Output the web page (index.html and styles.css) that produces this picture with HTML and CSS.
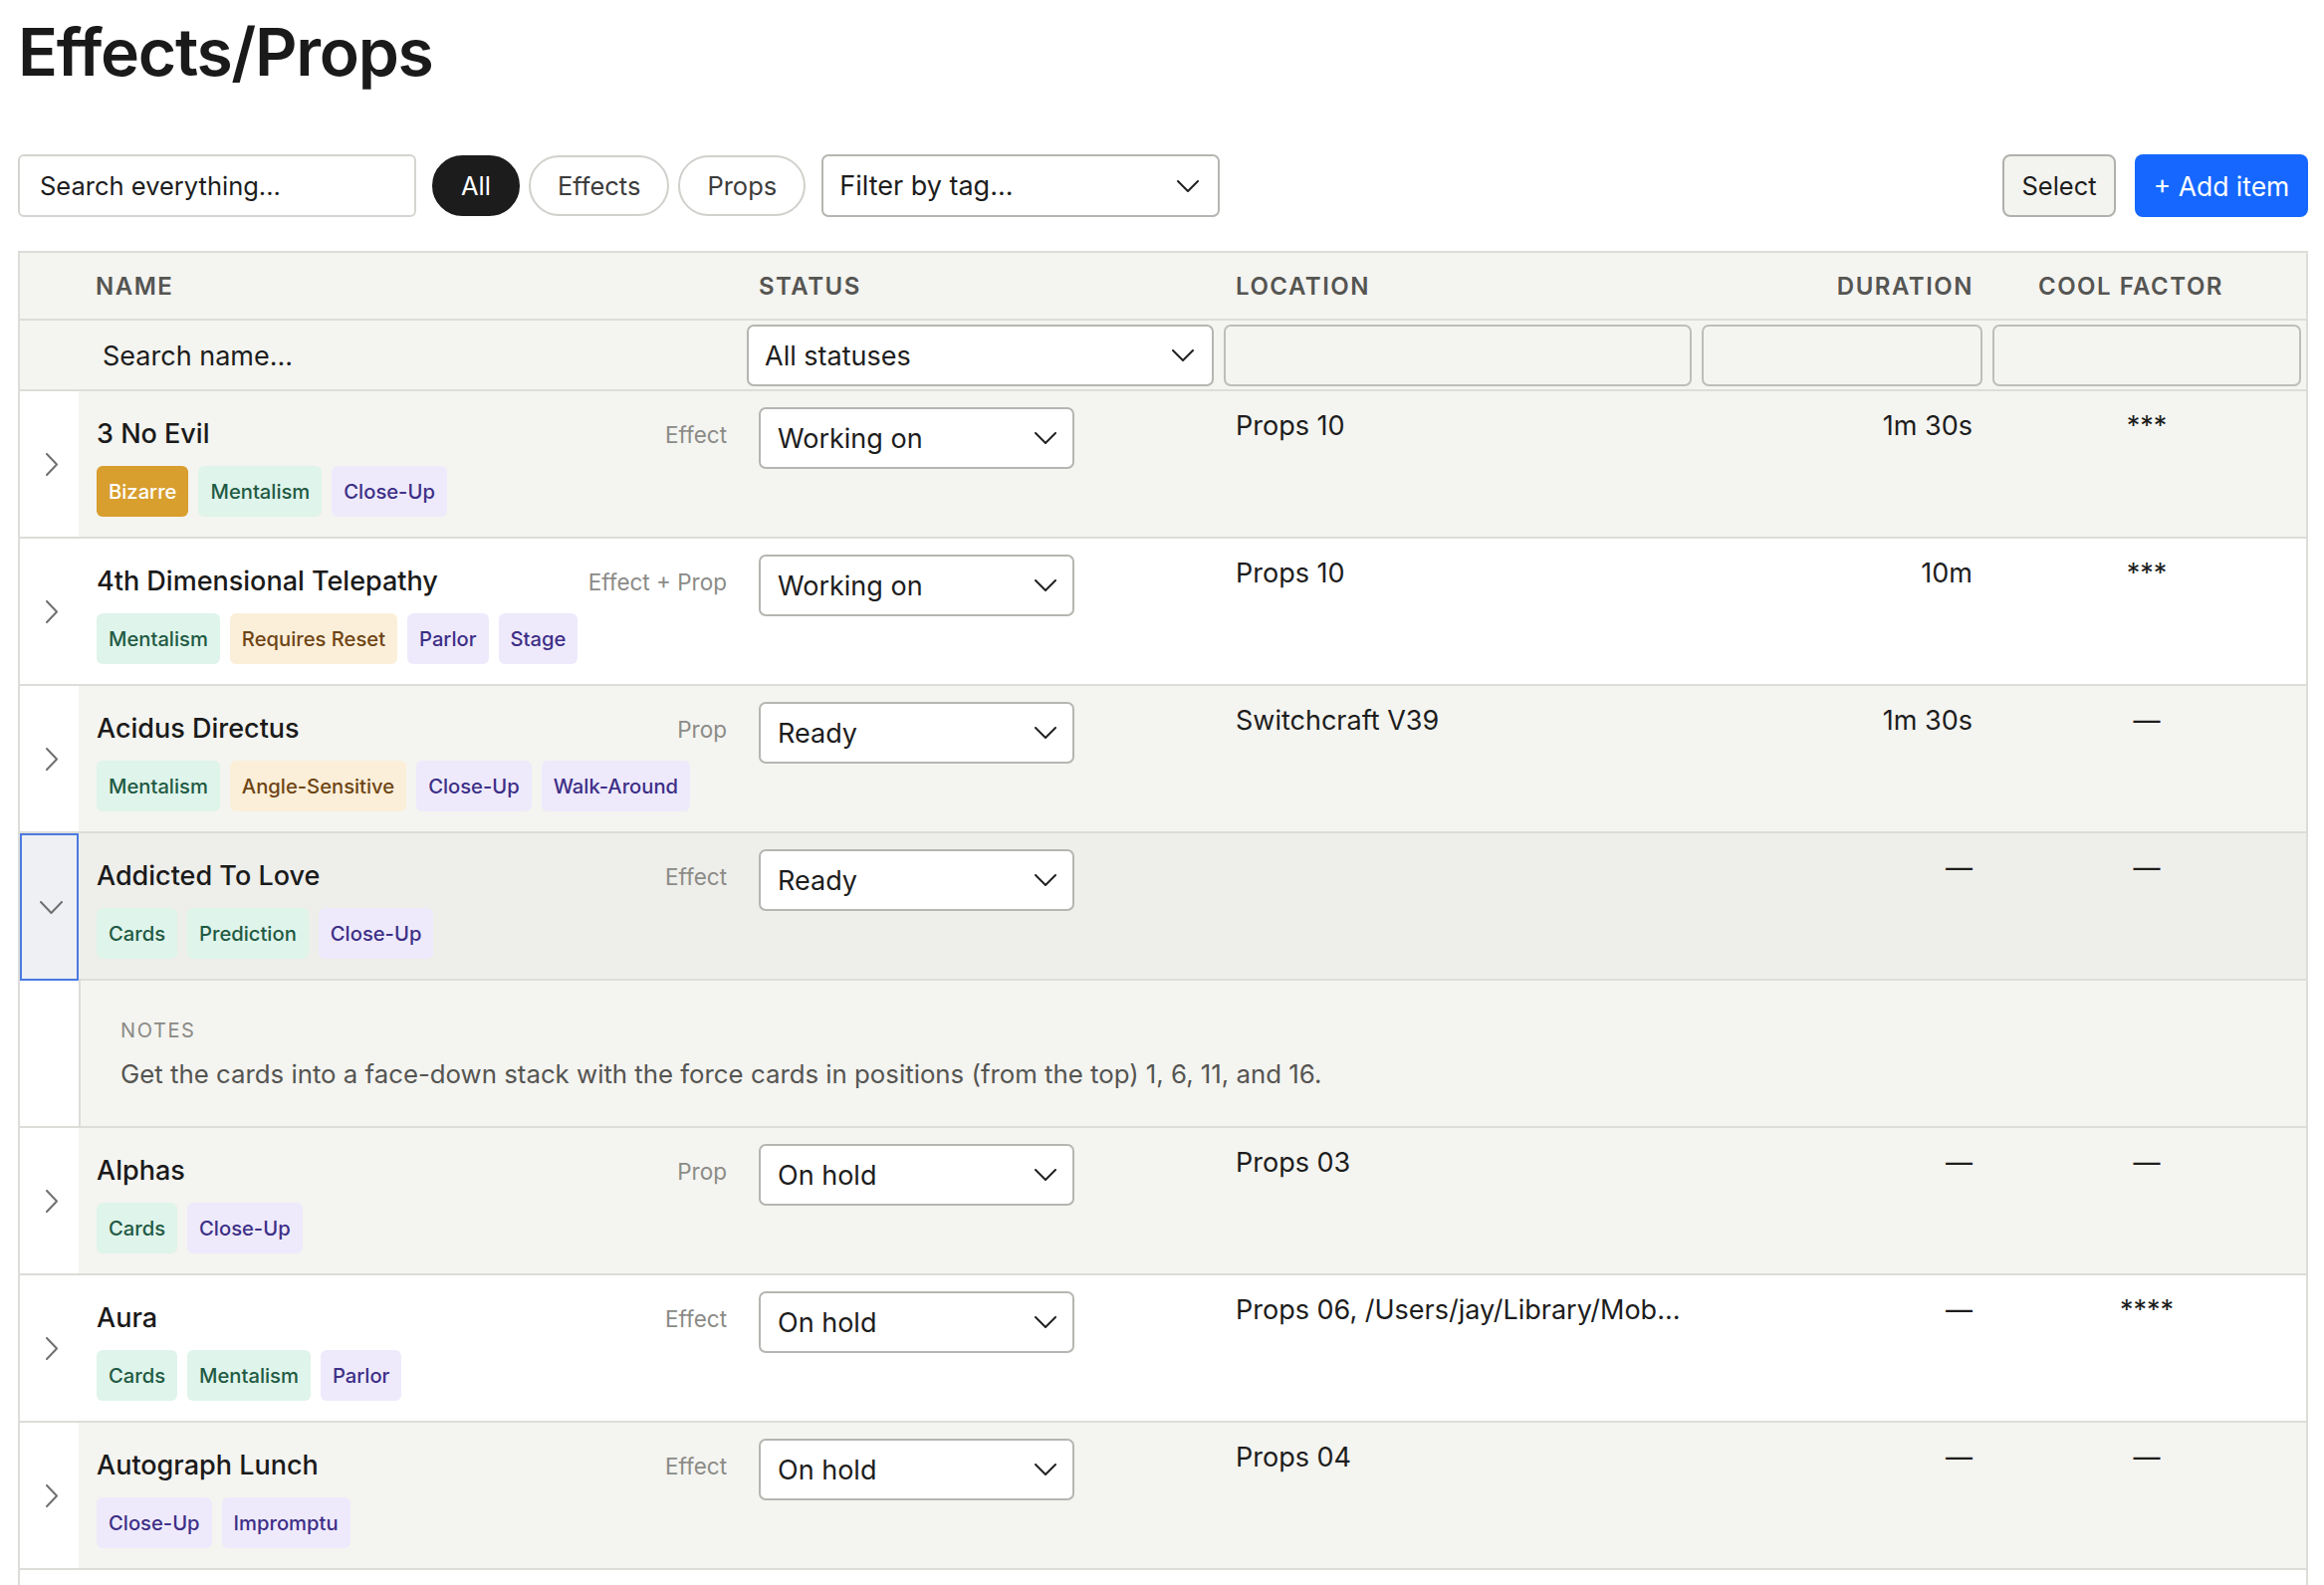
FILE: index.html
```html
<!DOCTYPE html>
<html lang="en">
<head>
<meta charset="utf-8">
<title>Effects/Props</title>
<link rel="stylesheet" href="styles.css">
</head>
<body>
<div class="page">
  <h1 class="title">Effects/Props</h1>

  <div class="toolbar">
    <input class="search" type="text" placeholder="Search everything...">
    <div class="pills">
      <button class="pill active">All</button>
      <button class="pill">Effects</button>
      <button class="pill">Props</button>
    </div>
    <div class="dropdown tag-filter">
      <span>Filter by tag...</span>
      <svg class="chev" viewBox="0 0 22 12" width="22" height="12"><path d="M1 1 L11 11 L21 1"/></svg>
    </div>
    <div class="spacer"></div>
    <button class="btn btn-select">Select</button>
    <button class="btn btn-add">+ Add item</button>
  </div>

  <div class="table-wrap">
    <table class="grid">
      <colgroup>
        <col class="c-exp">
        <col class="c-name">
        <col class="c-status">
        <col class="c-loc">
        <col class="c-dur">
        <col class="c-cool">
      </colgroup>
      <thead>
        <tr class="head">
          <th></th>
          <th>Name</th>
          <th>Status</th>
          <th>Location</th>
          <th class="dur">Duration</th>
          <th class="cool">Cool factor</th>
        </tr>
        <tr class="filters">
          <td></td>
          <td><input class="name-search" type="text" placeholder="Search name..."></td>
          <td>
            <div class="dropdown status-filter">
              <span>All statuses</span>
              <svg class="chev" viewBox="0 0 22 12" width="22" height="12"><path d="M1 1 L11 11 L21 1"/></svg>
            </div>
          </td>
          <td><div class="finput"></div></td>
          <td><div class="finput"></div></td>
          <td><div class="finput"></div></td>
        </tr>
      </thead>
      <tbody>
        <tr class="row gray">
          <td class="exp"><svg class="arrow" viewBox="0 0 12 23" width="12" height="23"><path d="M1 1 L11 11.5 L1 22"/></svg></td>
          <td class="name-cell">
            <div class="name-line"><span class="name">3 No Evil</span><span class="kind">Effect</span></div>
            <div class="tags"><span class="tag gold">Bizarre</span><span class="tag mint">Mentalism</span><span class="tag lav">Close-Up</span></div>
          </td>
          <td class="status-cell"><div class="dropdown status"><span>Working on</span><svg class="chev" viewBox="0 0 22 12" width="22" height="12"><path d="M1 1 L11 11 L21 1"/></svg></div></td>
          <td class="loc">Props 10</td>
          <td class="dur">1m 30s</td>
          <td class="cool">***</td>
        </tr>
        <tr class="row">
          <td class="exp"><svg class="arrow" viewBox="0 0 12 23" width="12" height="23"><path d="M1 1 L11 11.5 L1 22"/></svg></td>
          <td class="name-cell">
            <div class="name-line"><span class="name">4th Dimensional Telepathy</span><span class="kind">Effect + Prop</span></div>
            <div class="tags"><span class="tag mint">Mentalism</span><span class="tag peach">Requires Reset</span><span class="tag lav">Parlor</span><span class="tag lav">Stage</span></div>
          </td>
          <td class="status-cell"><div class="dropdown status"><span>Working on</span><svg class="chev" viewBox="0 0 22 12" width="22" height="12"><path d="M1 1 L11 11 L21 1"/></svg></div></td>
          <td class="loc">Props 10</td>
          <td class="dur">10m</td>
          <td class="cool">***</td>
        </tr>
        <tr class="row gray">
          <td class="exp"><svg class="arrow" viewBox="0 0 12 23" width="12" height="23"><path d="M1 1 L11 11.5 L1 22"/></svg></td>
          <td class="name-cell">
            <div class="name-line"><span class="name">Acidus Directus</span><span class="kind">Prop</span></div>
            <div class="tags"><span class="tag mint">Mentalism</span><span class="tag peach">Angle-Sensitive</span><span class="tag lav">Close-Up</span><span class="tag lav">Walk-Around</span></div>
          </td>
          <td class="status-cell"><div class="dropdown status"><span>Ready</span><svg class="chev" viewBox="0 0 22 12" width="22" height="12"><path d="M1 1 L11 11 L21 1"/></svg></div></td>
          <td class="loc">Switchcraft V39</td>
          <td class="dur">1m 30s</td>
          <td class="cool">—</td>
        </tr>
        <tr class="row open">
          <td class="exp focused"><svg class="arrow-down" viewBox="0 0 23 13" width="23" height="13"><path d="M1 1 L11.5 12 L22 1"/></svg></td>
          <td class="name-cell">
            <div class="name-line"><span class="name">Addicted To Love</span><span class="kind">Effect</span></div>
            <div class="tags"><span class="tag mint">Cards</span><span class="tag mint">Prediction</span><span class="tag lav">Close-Up</span></div>
          </td>
          <td class="status-cell"><div class="dropdown status"><span>Ready</span><svg class="chev" viewBox="0 0 22 12" width="22" height="12"><path d="M1 1 L11 11 L21 1"/></svg></div></td>
          <td class="loc"></td>
          <td class="dur">—</td>
          <td class="cool">—</td>
        </tr>
        <tr class="notes-row">
          <td class="exp"></td>
          <td class="notes" colspan="5">
            <div class="notes-label">Notes</div>
            <div class="notes-text">Get the cards into a face-down stack with the force cards in positions (from the top) 1, 6, 11, and 16.</div>
          </td>
        </tr>
        <tr class="row gray">
          <td class="exp"><svg class="arrow" viewBox="0 0 12 23" width="12" height="23"><path d="M1 1 L11 11.5 L1 22"/></svg></td>
          <td class="name-cell">
            <div class="name-line"><span class="name">Alphas</span><span class="kind">Prop</span></div>
            <div class="tags"><span class="tag mint">Cards</span><span class="tag lav">Close-Up</span></div>
          </td>
          <td class="status-cell"><div class="dropdown status"><span>On hold</span><svg class="chev" viewBox="0 0 22 12" width="22" height="12"><path d="M1 1 L11 11 L21 1"/></svg></div></td>
          <td class="loc">Props 03</td>
          <td class="dur">—</td>
          <td class="cool">—</td>
        </tr>
        <tr class="row">
          <td class="exp"><svg class="arrow" viewBox="0 0 12 23" width="12" height="23"><path d="M1 1 L11 11.5 L1 22"/></svg></td>
          <td class="name-cell">
            <div class="name-line"><span class="name">Aura</span><span class="kind">Effect</span></div>
            <div class="tags"><span class="tag mint">Cards</span><span class="tag mint">Mentalism</span><span class="tag lav">Parlor</span></div>
          </td>
          <td class="status-cell"><div class="dropdown status"><span>On hold</span><svg class="chev" viewBox="0 0 22 12" width="22" height="12"><path d="M1 1 L11 11 L21 1"/></svg></div></td>
          <td class="loc">Props 06, /Users/jay/Library/Mob...</td>
          <td class="dur">—</td>
          <td class="cool">****</td>
        </tr>
        <tr class="row gray">
          <td class="exp"><svg class="arrow" viewBox="0 0 12 23" width="12" height="23"><path d="M1 1 L11 11.5 L1 22"/></svg></td>
          <td class="name-cell">
            <div class="name-line"><span class="name">Autograph Lunch</span><span class="kind">Effect</span></div>
            <div class="tags"><span class="tag lav">Close-Up</span><span class="tag lav">Impromptu</span></div>
          </td>
          <td class="status-cell"><div class="dropdown status"><span>On hold</span><svg class="chev" viewBox="0 0 22 12" width="22" height="12"><path d="M1 1 L11 11 L21 1"/></svg></div></td>
          <td class="loc">Props 04</td>
          <td class="dur">—</td>
          <td class="cool">—</td>
        </tr>
        <tr class="row next">
          <td class="exp"></td>
          <td class="name-cell"></td>
          <td class="status-cell"><div class="dropdown status"></div></td>
          <td class="loc"></td>
          <td class="dur"></td>
          <td class="cool"></td>
        </tr>
      </tbody>
    </table>
  </div>
</div>
</body>
</html>
```

FILE: styles.css
```css
* {
  box-sizing: border-box;
}

html, body {
  margin: 0;
  background: #ffffff;
}

body {
  font-family: Inter, "Noto Sans", "Liberation Sans", sans-serif;
  color: #1d1d1d;
  overflow: hidden;
}

.page {
  padding: 19px 16px 0 18px;
}

.title {
  margin: 0;
  font-size: 66px;
  line-height: 66px;
  font-weight: 600;
  letter-spacing: -1.3px;
  color: #1a1a1a;
}

/* toolbar */
.toolbar {
  display: flex;
  align-items: center;
  margin-top: 70px;
  height: 63px;
}

.search {
  width: 400px;
  height: 63px;
  border: 2px solid #d4d4d0;
  border-radius: 6px;
  padding: 0 20px;
  font-family: inherit;
  font-size: 25.5px;
  color: #1d1d1d;
  background: #fff;
  outline: none;
}

.search::placeholder,
.name-search::placeholder {
  color: #1d1d1d;
  opacity: 1;
}

.pills {
  display: flex;
  gap: 9px;
  margin-left: 16px;
}

.pill {
  height: 61px;
  border: 2px solid #d0d0cc;
  border-radius: 31px;
  padding: 0 27px;
  font-family: inherit;
  font-size: 25.5px;
  background: #fff;
  color: #3c3c3c;
  display: flex;
  align-items: center;
}

.pill.active {
  background: #1c1c1c;
  border-color: #1c1c1c;
  color: #fff;
}

.dropdown {
  display: flex;
  align-items: center;
  justify-content: space-between;
  background: #fff;
  border: 2px solid #b5b5b1;
  border-radius: 7px;
  color: #1d1d1d;
}

.chev {
  flex: none;
}

.chev path {
  fill: none;
  stroke: #222;
  stroke-width: 2;
  stroke-linecap: round;
  stroke-linejoin: round;
}

.tag-filter {
  margin-left: 16px;
  width: 400px;
  height: 63px;
  padding: 0 19px 0 16px;
  font-size: 27px;
}

.spacer {
  flex: 1;
}

.btn {
  height: 63px;
  border-radius: 8px;
  font-family: inherit;
  font-size: 25.5px;
  padding: 0;
}

.btn-select {
  width: 114px;
  background: #f3f3ef;
  border: 2px solid #b0b0ac;
  color: #1d1d1d;
}

.btn-add {
  width: 174px;
  margin-left: 19px;
  background: #1567ff;
  border: none;
  color: #fff;
  font-size: 26.5px;
}

/* table */
.table-wrap {
  margin-top: 34px;
  border: 2px solid #dcdcd8;
  border-bottom: none;
}

.grid {
  width: 100%;
  border-collapse: separate;
  border-spacing: 0;
  table-layout: fixed;
}

.c-exp { width: 59px; }
.c-name { width: 666px; }
.c-status { width: 479px; }
.c-loc { width: 480px; }
.c-dur { width: 292px; }
.c-cool { width: 320px; }

.head th {
  background: #f4f4f0;
  border-bottom: 2px solid #dcdcd8;
  font-size: 24px;
  line-height: 30px;
  font-weight: 600;
  letter-spacing: 1.5px;
  text-transform: uppercase;
  color: #555552;
  text-align: left;
  padding: 19px 15px 17px 17px;
}

.head th.dur {
  text-align: right;
  padding-right: 14px;
}

.head th.cool {
  text-align: center;
  padding: 19px 32px 17px 0;
}

.filters td {
  background: #f4f4f0;
  border-bottom: 2px solid #dcdcd8;
  padding: 4px 5px 3px;
  height: 71px;
}

.name-search {
  width: 100%;
  height: 62px;
  border: none;
  background: transparent;
  padding: 0 0 0 19px;
  font-family: inherit;
  font-size: 27px;
  color: #1d1d1d;
  outline: none;
}

.status-filter {
  height: 62px;
  padding: 0 18px 0 16px;
  font-size: 27px;
}

.finput {
  height: 62px;
  border: 2px solid #bdbdb9;
  border-radius: 7px;
}

/* data rows */
.row td,
.notes-row td {
  vertical-align: top;
  border-bottom: 2px solid #dcdcd8;
  background: #fff;
}

.row.gray td:not(.exp) {
  background: #f4f4f0;
}

.row.open td {
  background: #eeeeea;
}

.row.open td.exp {
  background: #eef0f4;
}

.exp {
  padding: 0;
}

.row td.exp {
  vertical-align: middle;
  text-align: center;
}

.focused {
  outline: 2px solid #4a7ae2;
  outline-offset: -2px;
}

.arrow,
.arrow-down {
  display: inline-block;
  vertical-align: middle;
}

.arrow {
  margin-left: 5px;
}

.arrow-down {
  margin-left: 4px;
}

.arrow path,
.arrow-down path {
  fill: none;
  stroke: #707070;
  stroke-width: 2;
  stroke-linecap: round;
  stroke-linejoin: round;
}

.name-cell {
  padding: 25px 15px 20px 18px;
}

.row.next td {
  height: 148px;
}

.name-line {
  display: flex;
  justify-content: space-between;
  align-items: baseline;
  height: 36px;
}

.name {
  font-size: 27px;
  line-height: 36px;
  font-weight: 500;
  color: #1a1a1a;
}

.kind {
  font-size: 22.5px;
  color: #8b8b87;
}

.tags {
  display: flex;
  gap: 10px;
  margin-top: 14px;
}

.tag {
  height: 51px;
  line-height: 51px;
  padding: 0 12px;
  border-radius: 6px;
  font-size: 20.2px;
  font-weight: 500;
  white-space: nowrap;
}

.tag.gold { background: #d89e2e; color: #ffffff; }
.tag.mint { background: #dff4eb; color: #1f5a43; }
.tag.lav { background: #eeeafc; color: #3d2f86; }
.tag.peach { background: #fcefd9; color: #6e4515; }

.status-cell {
  padding: 16px 0 0 17px;
}

.status {
  width: 317px;
  height: 62px;
  padding: 0 16px 0 17px;
  font-size: 27px;
}

.loc,
.dur,
.cool {
  font-size: 27px;
  line-height: 36px;
  padding-top: 17px;
}

.loc {
  padding-left: 17px;
  padding-right: 15px;
  white-space: nowrap;
  overflow: hidden;
  text-overflow: ellipsis;
}

td.dur {
  text-align: right;
  padding-right: 15px;
}

td.cool {
  text-align: center;
}

/* notes */
.notes-row td.notes {
  background: #f4f4f0;
  border-left: 2px solid #dcdcd8;
  padding: 37px 20px 35px 40px;
}

.notes-label {
  font-size: 20px;
  line-height: 26px;
  letter-spacing: 1.6px;
  text-transform: uppercase;
  color: #8a8a86;
}

.notes-text {
  margin-top: 14px;
  font-size: 25.8px;
  line-height: 34px;
  color: #555552;
}
```
